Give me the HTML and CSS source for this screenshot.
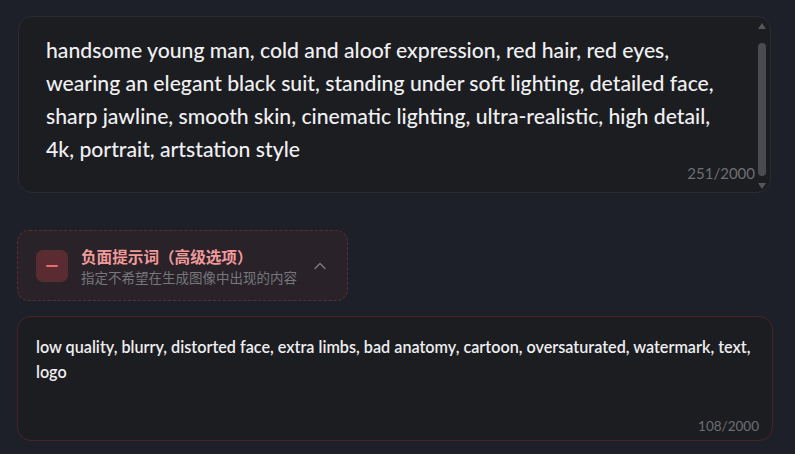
FILE: index.html
```html
<!DOCTYPE html>
<html lang="zh">
<head>
<meta charset="utf-8">
<link rel="stylesheet" href="styles.css">
</head>
<body>
<div class="page">
  <div class="card card-main">
    <div class="prompt">handsome young man, cold and aloof expression, red hair, red eyes, wearing an elegant black suit, standing under soft lighting, detailed face, sharp jawline, smooth skin, cinematic lighting, ultra-realistic, high detail, 4k, portrait, artstation style</div>
    <div class="counter counter-main">251/2000</div>
    <div class="scrollbar">
      <span class="arrow arrow-up"></span>
      <span class="thumb"></span>
      <span class="arrow arrow-down"></span>
    </div>
  </div>

  <div class="toggle">
    <div class="toggle-icon"><span class="minus"></span></div>
    <div class="toggle-text">
      <div class="toggle-title">负面提示词（高级选项）</div>
      <div class="toggle-sub">指定不希望在生成图像中出现的内容</div>
    </div>
    <svg class="chevron" width="14" height="10" viewBox="0 0 14 10"><path d="M2 7.5 L7 2.5 L12 7.5" fill="none" stroke="#7a7b80" stroke-width="1.4" stroke-linecap="round" stroke-linejoin="round"/></svg>
  </div>

  <div class="card card-neg">
    <div class="neg-text">low quality, blurry, distorted face, extra limbs, bad anatomy, cartoon, oversaturated, watermark, text, logo</div>
    <div class="counter counter-neg">108/2000</div>
  </div>
</div>
</body>
</html>
```
FILE: styles.css
```css
html, body {
  margin: 0;
  padding: 0;
  background: #1e2029;
}
body {
  font-family: Lato, "Noto Sans CJK SC", sans-serif;
  color: #ececee;
}
.page {
  display: flex;
  flex-direction: column;
  padding-top: 16px;
  width: 795px;
  height: 454px;
  box-sizing: border-box;
  overflow: hidden;
}
.card {
  position: relative;
  box-sizing: border-box;
  background: #1c1d21;
  border-radius: 14px;
}
.card-main {
  margin-left: 18px;
  width: 753px;
  height: 177px;
  border: 1px solid #2b2c31;
  padding: 17px 40px 0 27px;
}
.prompt {
  font-size: 21.2px;
  line-height: 33px;
  font-weight: 500;
  color: #f0f0f2;
}
.counter {
  position: absolute;
  color: #6d6e73;
}
.counter-main {
  right: 15px;
  bottom: 10px;
  font-size: 15px;
}
.scrollbar {
  position: absolute;
  top: 5px;
  right: 4px;
  bottom: 3px;
  width: 8px;
  display: flex;
  flex-direction: column;
  align-items: center;
}
.arrow {
  width: 0;
  height: 0;
  border-left: 4px solid transparent;
  border-right: 4px solid transparent;
}
.arrow-up {
  margin-top: 1px;
  border-bottom: 6px solid #54555a;
}
.arrow-down {
  border-top: 6px solid #54555a;
}
.thumb {
  flex: 1;
  width: 8px;
  margin: 14px 0 7px;
  background: #4a4b50;
  border-radius: 4px;
}
.toggle {
  margin-top: 37px;
  margin-left: 17px;
  width: 331px;
  height: 71px;
  box-sizing: border-box;
  border: 1px dashed #5e2c36;
  border-radius: 12px;
  background: #2a2229;
  display: flex;
  align-items: center;
  padding: 0 18px;
}
.toggle-icon {
  width: 32px;
  height: 32px;
  border-radius: 7px;
  background: #5a2c32;
  display: flex;
  align-items: center;
  justify-content: center;
  flex: none;
}
.minus {
  width: 12px;
  height: 2px;
  background: #e46c6c;
  border-radius: 1px;
}
.toggle-text {
  margin-left: 13px;
  display: flex;
  flex-direction: column;
  gap: 3px;
}
.toggle-title {
  font-family: "Noto Sans CJK SC", sans-serif;
  font-size: 15.6px;
  font-weight: 700;
  line-height: 20px;
  color: #f09a9a;
}
.toggle-sub {
  font-family: "Noto Sans CJK SC", sans-serif;
  font-size: 13.5px;
  line-height: 17px;
  color: #76777c;
}
.chevron {
  margin-left: auto;
  margin-right: 2px;
}
.card-neg {
  margin-top: 15px;
  margin-left: 17px;
  width: 756px;
  height: 125px;
  border: 1px solid #48242a;
  padding: 17px 18px 0 18px;
}
.neg-text {
  font-size: 16.2px;
  line-height: 25px;
  font-weight: 600;
  color: #eeeef0;
}
.counter-neg {
  right: 13px;
  bottom: 6px;
  font-size: 13.5px;
}
```
